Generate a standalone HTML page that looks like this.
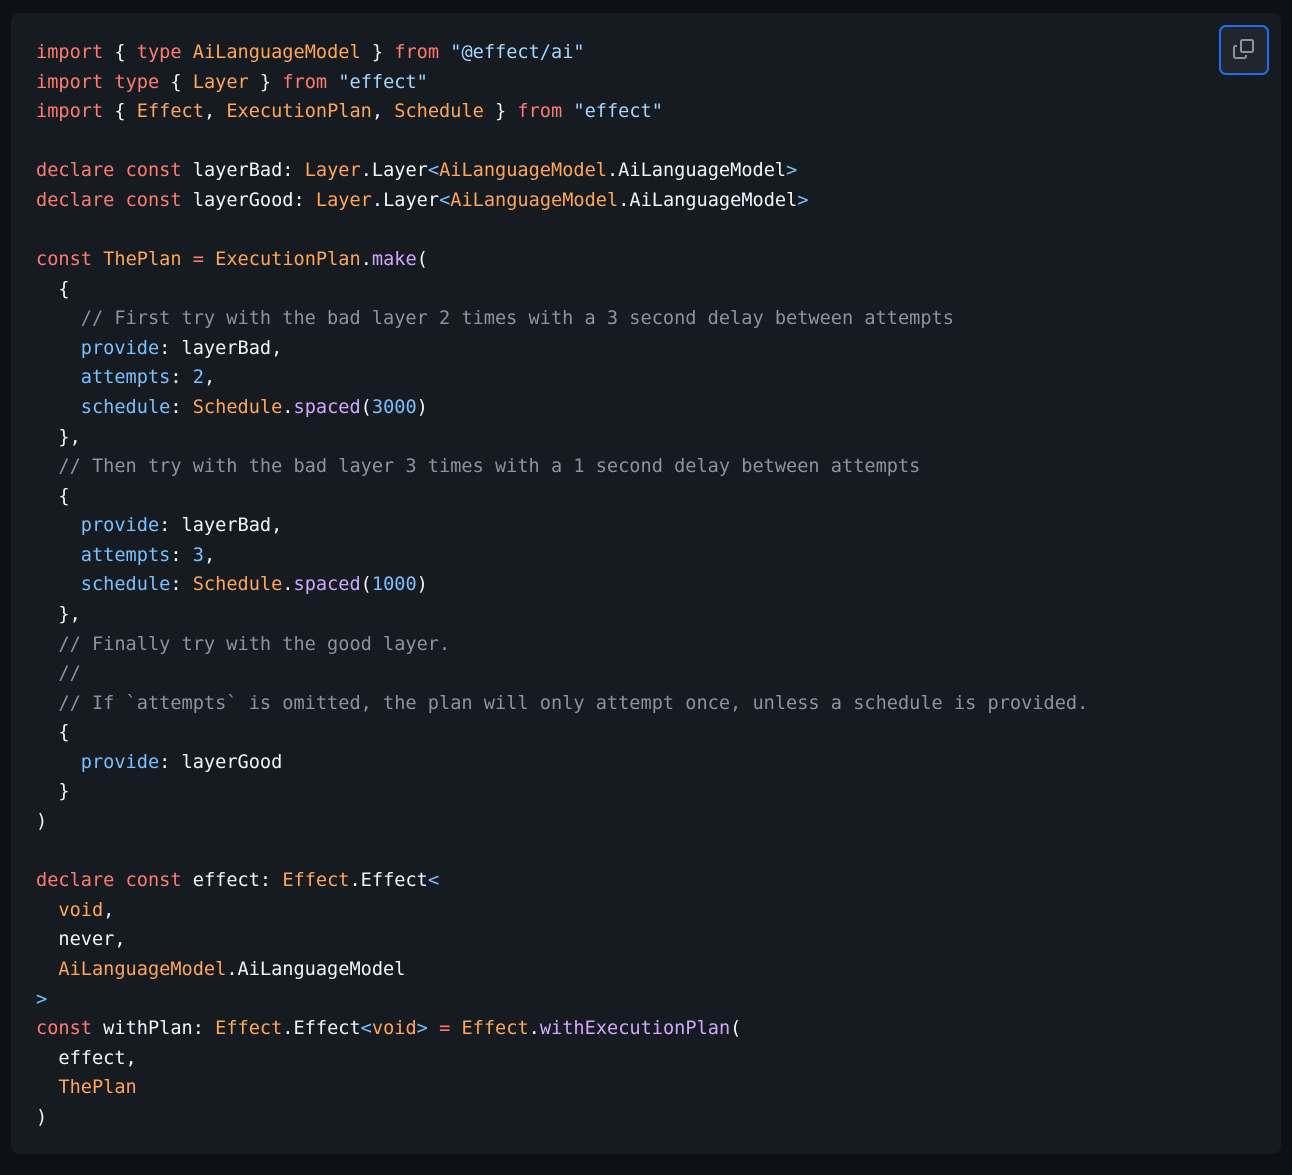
<!DOCTYPE html>
<html><head><meta charset="utf-8"><style>
html,body{margin:0;padding:0;background:#0d1117;width:1292px;height:1175px;overflow:hidden}
.box{position:absolute;left:11px;top:13px;width:1270px;height:1141px;background:#161b22;border-radius:9px}
pre{margin:0;position:absolute;left:25px;top:25px;font-family:"DejaVu Sans Mono","Liberation Mono",monospace;font-size:18.6px;line-height:29.58px;color:#f0f6fc}
.k{color:#ff7b72}.e{color:#ffa657}.s{color:#a5d6ff}.c{color:#8b949e}.p{color:#79c0ff}.f{color:#d2a8ff}
.btn{position:absolute;left:1219px;top:25px;width:46px;height:46px;border:2px solid #1f6feb;border-radius:7px;background:#21262d}
</style></head><body><div class="box"><pre><span class="k">import</span> { <span class="k">type</span> <span class="e">AiLanguageModel</span> } <span class="k">from</span> <span class="s">"@effect/ai"</span>
<span class="k">import</span> <span class="k">type</span> { <span class="e">Layer</span> } <span class="k">from</span> <span class="s">"effect"</span>
<span class="k">import</span> { <span class="e">Effect</span>, <span class="e">ExecutionPlan</span>, <span class="e">Schedule</span> } <span class="k">from</span> <span class="s">"effect"</span>

<span class="k">declare</span> <span class="k">const</span> layerBad: <span class="e">Layer</span>.Layer<span class="p">&lt;</span><span class="e">AiLanguageModel</span>.AiLanguageModel<span class="p">&gt;</span>
<span class="k">declare</span> <span class="k">const</span> layerGood: <span class="e">Layer</span>.Layer<span class="p">&lt;</span><span class="e">AiLanguageModel</span>.AiLanguageModel<span class="p">&gt;</span>

<span class="k">const</span> <span class="e">ThePlan</span> <span class="k">=</span> <span class="e">ExecutionPlan</span>.<span class="f">make</span>(
  {
    <span class="c">// First try with the bad layer 2 times with a 3 second delay between attempts</span>
    <span class="p">provide</span>: layerBad,
    <span class="p">attempts</span>: <span class="p">2</span>,
    <span class="p">schedule</span>: <span class="e">Schedule</span>.<span class="f">spaced</span>(<span class="p">3000</span>)
  },
  <span class="c">// Then try with the bad layer 3 times with a 1 second delay between attempts</span>
  {
    <span class="p">provide</span>: layerBad,
    <span class="p">attempts</span>: <span class="p">3</span>,
    <span class="p">schedule</span>: <span class="e">Schedule</span>.<span class="f">spaced</span>(<span class="p">1000</span>)
  },
  <span class="c">// Finally try with the good layer.</span>
  <span class="c">//</span>
  <span class="c">// If `attempts` is omitted, the plan will only attempt once, unless a schedule is provided.</span>
  {
    <span class="p">provide</span>: layerGood
  }
)

<span class="k">declare</span> <span class="k">const</span> effect: <span class="e">Effect</span>.Effect<span class="p">&lt;</span>
  <span class="e">void</span>,
  never,
  <span class="e">AiLanguageModel</span>.AiLanguageModel
<span class="p">&gt;</span>
<span class="k">const</span> withPlan: <span class="e">Effect</span>.Effect<span class="p">&lt;</span><span class="e">void</span><span class="p">&gt;</span> <span class="k">=</span> <span class="e">Effect</span>.<span class="f">withExecutionPlan</span>(
  effect,
  <span class="e">ThePlan</span>
)</pre></div>
<div class="btn"><svg width="46" height="46" viewBox="0 0 46 46" fill="none" stroke="#8b949e" stroke-width="2"><rect x="20" y="13" width="12" height="12" rx="1.5"/><path d="M16 19h-1.5a1.5 1.5 0 0 0-1.5 1.5v9a1.5 1.5 0 0 0 1.5 1.5h9a1.5 1.5 0 0 0 1.5-1.5V28"/></svg></div>
</body></html>
